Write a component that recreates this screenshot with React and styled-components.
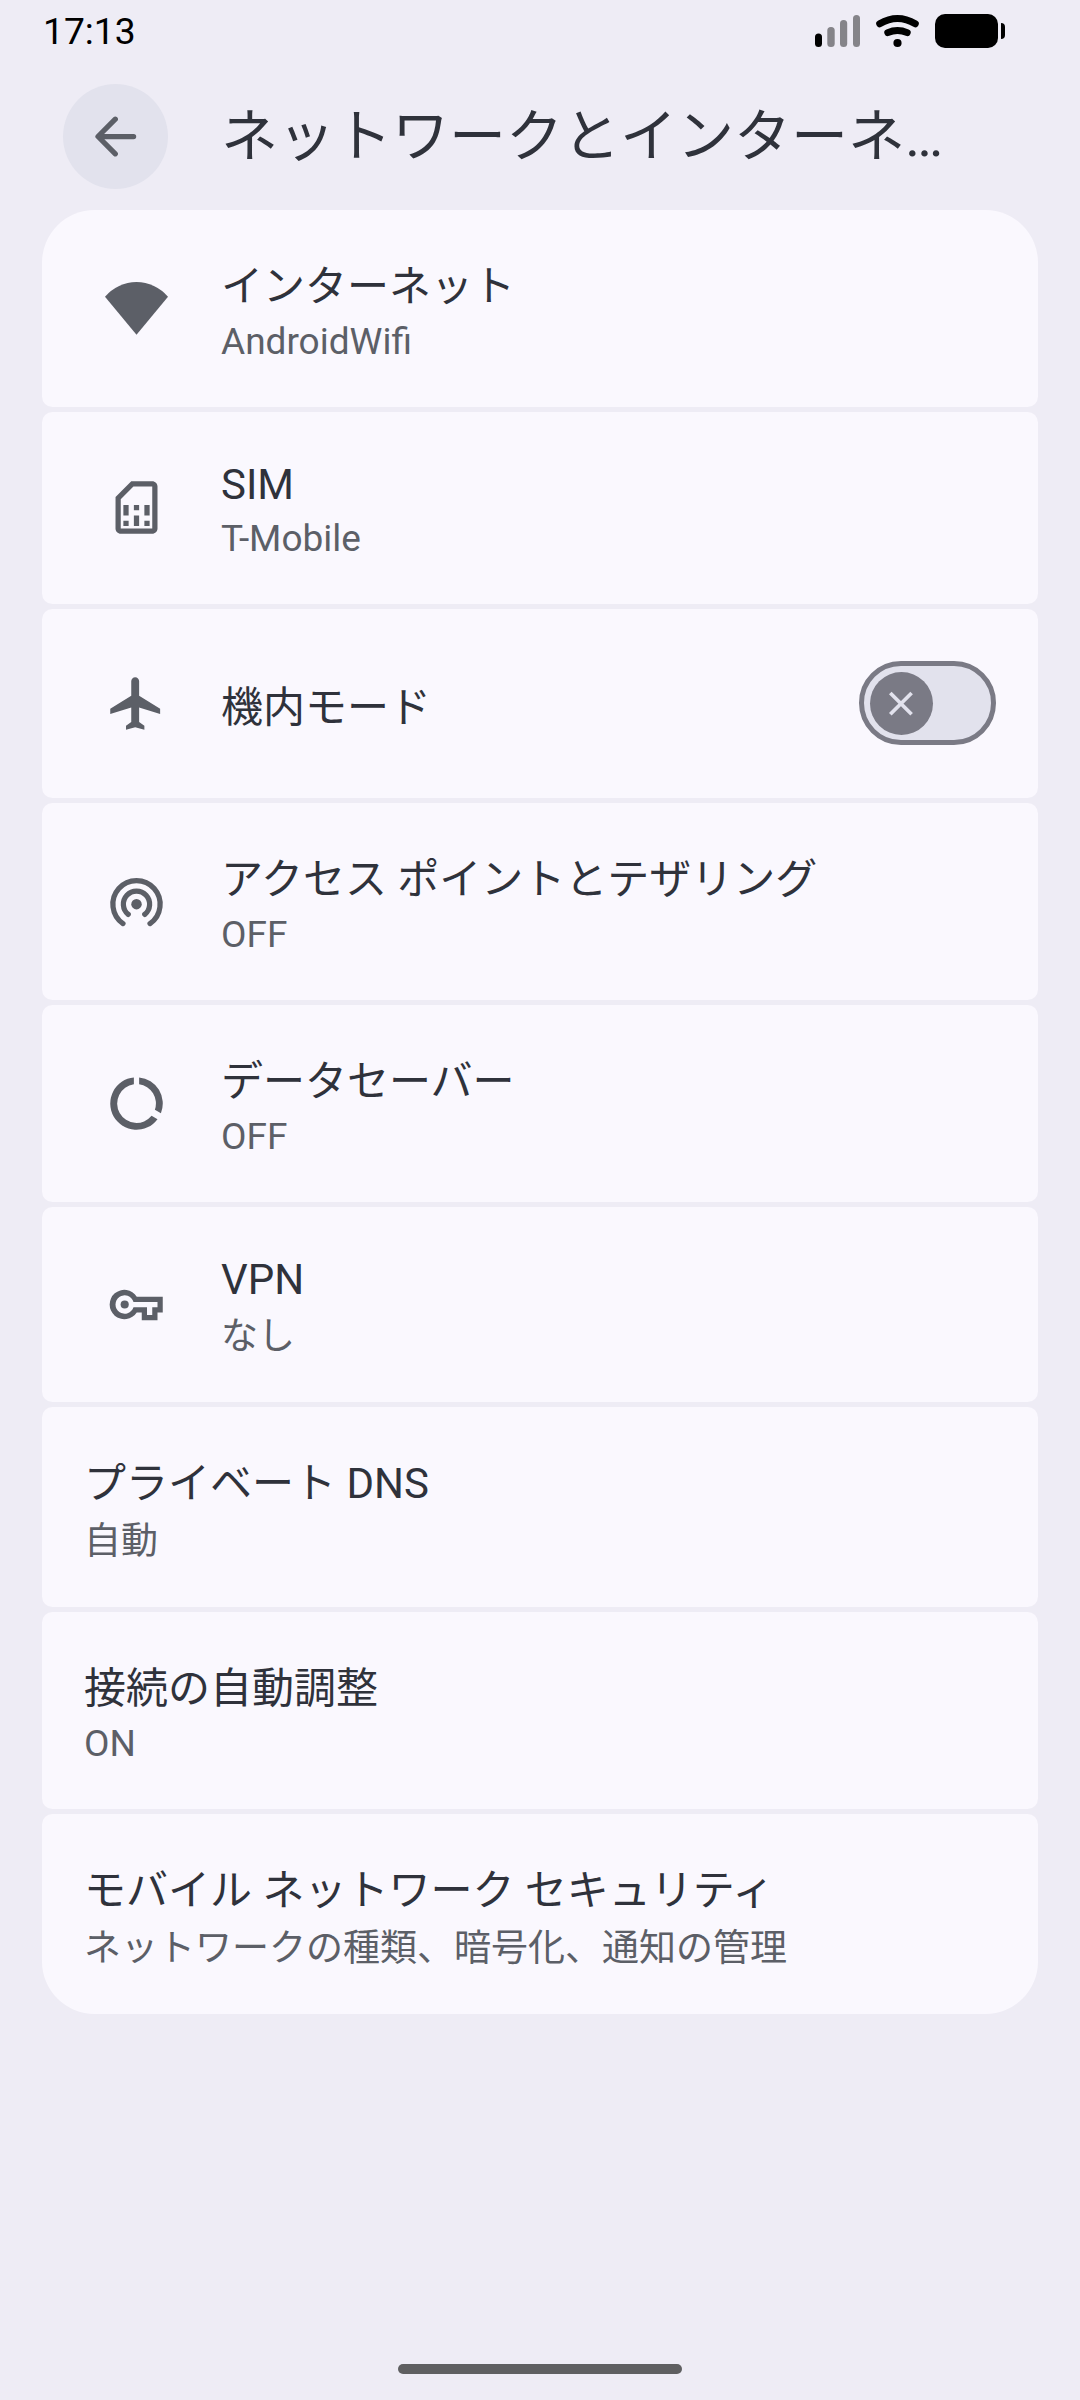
import React from "react";
import styled, { createGlobalStyle } from "styled-components";

const GlobalStyle = createGlobalStyle`
  * { box-sizing: border-box; }
  body {
    margin: 0;
    background: #eeecf5;
    font-family: Roboto, "Noto Sans CJK JP", sans-serif;
  }
`;

const Screen = styled.div`
  width: 1080px;
  height: 2400px;
  display: flex;
  flex-direction: column;
  background: #eeecf5;
  overflow: hidden;
`;

const StatusBar = styled.div`
  height: 62px;
  display: flex;
  align-items: center;
  justify-content: space-between;
  padding: 0 75px 0 43px;
  color: #000;
`;

const Clock = styled.span`
  font-size: 37.2px;
  line-height: 62px;
`;

const StatusIcons = styled.svg`
  width: 190px;
  height: 62px;
  display: block;
`;

const Header = styled.header`
  display: flex;
  align-items: center;
  height: 105px;
  margin-top: 22px;
  padding: 0 63px;
`;

const BackButton = styled.button`
  width: 105px;
  height: 105px;
  flex: none;
  display: flex;
  align-items: center;
  justify-content: center;
  border: 0;
  padding: 0;
  border-radius: 50%;
  background: #e2e2ed;
  color: #5c5f67;
`;

const Heading = styled.h1`
  margin: 0 0 0 53px;
  flex: 1;
  font-size: 57px;
  font-weight: 400;
  line-height: 105px;
  color: #2f323b;
  white-space: nowrap;
`;

const List = styled.main`
  margin: 21px 42px 0;
  display: flex;
  flex-direction: column;
  gap: 5px;
`;

const Card = styled.section`
  display: flex;
  align-items: center;
  min-height: 189px;
  padding: 0 42px;
  background: #faf8fe;
  border-radius: 10.5px;

  &:first-child {
    border-top-left-radius: 52.5px;
    border-top-right-radius: 52.5px;
  }
  &:last-child {
    border-bottom-left-radius: 52.5px;
    border-bottom-right-radius: 52.5px;
  }
`;

const IconBox = styled.div`
  flex: none;
  width: 63px;
  height: 63px;
  margin: 0 53px 0 21px;
  color: #5c5f67;

  svg {
    display: block;
    width: 63px;
    height: 63px;
  }
`;

const Texts = styled.div`
  flex: 1;
  padding: 48px 0 44px;
`;

const Title = styled.div`
  padding: ${(p) => (p.$tall ? "4px 0 1px" : "0")};
  font-size: 42px;
  line-height: 49px;
  color: #2f323b;
  white-space: nowrap;
`;

const Summary = styled.div`
  margin-top: 8px;
  padding-top: ${(p) => (p.$tall ? 3 : 0)}px;
  font-size: 37px;
  line-height: 43px;
  color: #5c5f67;
  white-space: nowrap;
`;

const Track = styled.div`
  flex: none;
  width: 137px;
  height: 84px;
  margin-bottom: 1px;
  display: flex;
  align-items: center;
  padding-left: 6px;
  border: 5px solid #7a7a85;
  border-radius: 42px;
  background: #e2e2ed;
`;

const Thumb = styled.div`
  width: 63px;
  height: 63px;
  border-radius: 50%;
  background: #7a7a85;

  svg {
    display: block;
  }
`;

const Footer = styled.footer`
  margin-top: auto;
  padding-bottom: 26px;
  display: flex;
  justify-content: center;
`;

const Handle = styled.div`
  width: 284px;
  height: 10px;
  border-radius: 5px;
  background: #5f5f61;
`;

const WifiIcon = () => (
  <svg viewBox="0 0 63 63">
    <path fill="currentColor" d="M31.5 57.8 0 19.7A41.3 41.3 0 0 1 63 19.7Z" />
  </svg>
);

const SimIcon = () => (
  <svg viewBox="0 0.38 24 24">
    <path
      fill="currentColor"
      d="M18 2h-8L4.02 8 4 20c0 1.1.9 2 2 2h12c1.1 0 2-.9 2-2V4c0-1.1-.9-2-2-2zm0 2v16H6V8.83L10.83 4H18zM7 17h2v2H7zm8 0h2v2h-2zm-8-6h2v4H7zm4 4h2v4h-2zm0-4h2v2h-2zm4 0h2v4h-2z"
    />
  </svg>
);

const PlaneIcon = () => (
  <svg viewBox="0 0 24 24">
    <path
      fill="currentColor"
      d="M21 16v-2l-8-5V3.5c0-.83-.67-1.5-1.5-1.5S10 2.67 10 3.5V9l-8 5v2l8-2.5V19l-2 1.5V22l3.5-1 3.5 1v-1.5L13 19v-5.5l8 2.5z"
    />
  </svg>
);

const HotspotIcon = () => (
  <svg viewBox="0 0 24 24" fill="none" stroke="currentColor" strokeWidth="2" strokeLinecap="round">
    <path d="M6.85 20.4A9 9 0 1 1 17.15 20.4" />
    <path d="M8.85 16.9A5 5 0 1 1 15.15 16.9" />
    <circle cx="12" cy="13" r="2" fill="currentColor" stroke="none" />
  </svg>
);

const DataIcon = () => (
  <svg viewBox="0 0 24 24" fill="currentColor">
    <path d="M13 2.05A10 10 0 0 1 21.3 15.7L19 14.4A7.4 7.4 0 0 0 13 4.67Z" />
    <path d="M11 2.05A10 10 0 1 0 20 18L17.75 16.7A7.4 7.4 0 1 1 11 4.67Z" />
  </svg>
);

const KeyIcon = () => (
  <svg viewBox="0 0 24 24" fill="currentColor">
    <path
      fillRule="evenodd"
      d="M12.1 9A5.6 5.6 0 1 0 12.1 15H14V18H20V15H22V9ZM10.85 11H20V13H18V16H16V13H10.85A3.5 3.5 0 1 1 10.85 11Z"
    />
    <circle cx="7.5" cy="12" r="1.55" />
  </svg>
);

const ITEMS = [
  { icon: WifiIcon, title: "インターネット", summary: "AndroidWifi", tallTitle: true },
  { icon: SimIcon, title: "SIM", summary: "T-Mobile" },
  { icon: PlaneIcon, title: "機内モード", tallTitle: true, toggle: true },
  { icon: HotspotIcon, title: "アクセス ポイントとテザリング", summary: "OFF", tallTitle: true },
  { icon: DataIcon, title: "データセーバー", summary: "OFF", tallTitle: true },
  { icon: KeyIcon, title: "VPN", summary: "なし", tallSummary: true },
  { title: "プライベート DNS", summary: "自動", tallTitle: true, tallSummary: true },
  { title: "接続の自動調整", summary: "ON", tallTitle: true },
  {
    title: "モバイル ネットワーク セキュリティ",
    summary: "ネットワークの種類、暗号化、通知の管理",
    tallTitle: true,
    tallSummary: true,
  },
];

const Switch = () => (
  <Track role="switch" aria-checked="false">
    <Thumb>
      <svg width="63" height="63" viewBox="0 0 63 63">
        <path d="M20.3 21 41.6 42.3M41.6 21 20.3 42.3" stroke="#e2e2ed" strokeWidth="3.7" />
      </svg>
    </Thumb>
  </Track>
);

const Item = ({ icon: Icon, title, summary, tallTitle, tallSummary, toggle }) => (
  <Card>
    {Icon && (
      <IconBox>
        <Icon />
      </IconBox>
    )}
    <Texts>
      <Title $tall={tallTitle}>{title}</Title>
      {summary && <Summary $tall={tallSummary}>{summary}</Summary>}
    </Texts>
    {toggle && <Switch />}
  </Card>
);

export default function App() {
  return (
    <Screen lang="ja">
      <GlobalStyle />
      <StatusBar>
        <Clock>17:13</Clock>
        <StatusIcons viewBox="815 0 190 62">
          <rect x="815" y="33.5" width="7" height="13.5" rx="3.5" />
          <g fill="#858489">
            <rect x="827.3" y="27" width="7.4" height="20" rx="3.5" />
            <rect x="840" y="20" width="7.2" height="27" rx="3.5" />
            <rect x="853" y="15" width="7" height="32" rx="3.5" />
          </g>
          <g fill="none" stroke="#000" strokeWidth="7" strokeLinecap="round">
            <path d="M879.7 23.8Q897.5 13.2 915.3 23.8" />
            <path d="M887.8 32.6Q897.5 28.4 907.2 32.6" />
          </g>
          <circle cx="897.5" cy="43" r="4.1" />
          <rect x="935" y="14" width="63" height="34" rx="10" />
          <path d="M1001 23Q1005 23 1005 27V35Q1005 39 1001 39Z" />
        </StatusIcons>
      </StatusBar>
      <Header>
        <BackButton aria-label="戻る">
          <svg width="42" height="42" viewBox="0 0 42 42" fill="none" stroke="currentColor" strokeWidth="5.25" strokeLinecap="round" strokeLinejoin="round">
            <path d="M20.3 3.2 3 20.5 20.3 37.8M3.5 20.5H38.6" />
          </svg>
        </BackButton>
        <Heading>ネットワークとインターネ…</Heading>
      </Header>
      <List>
        {ITEMS.map((item) => (
          <Item key={item.title} {...item} />
        ))}
      </List>
      <Footer>
        <Handle />
      </Footer>
    </Screen>
  );
}
